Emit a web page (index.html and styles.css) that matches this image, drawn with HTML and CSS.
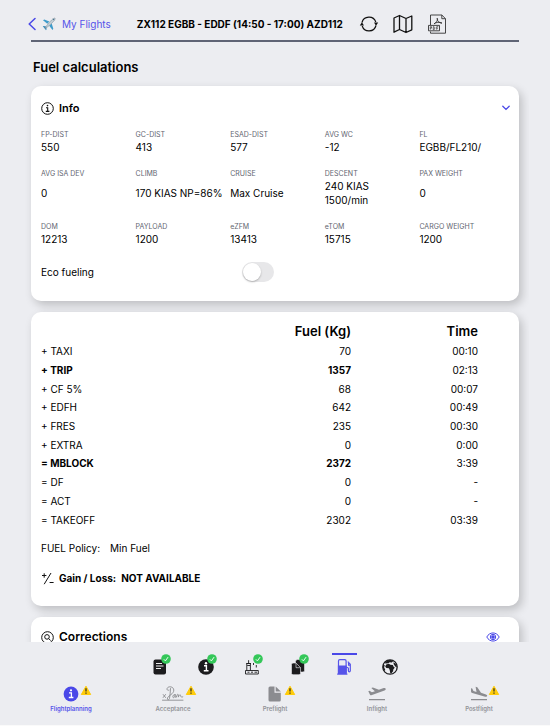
FILE: index.html
```html
<!DOCTYPE html>
<html lang="en">
<head>
<meta charset="utf-8">
<meta name="viewport" content="width=device-width, initial-scale=1">
<title>Fuel calculations</title>
<link rel="stylesheet" href="styles.css">
</head>
<body>
<svg class="defs" aria-hidden="true">
  <symbol id="check" viewBox="0 0 10 10"><circle cx="5" cy="5" r="4.8" fill="#34c759"/><path d="M2.9 5.3l1.5 1.6 2.7-3.8" fill="none" stroke="#fff" stroke-width=".9"/></symbol>
  <symbol id="warn" viewBox="0 0 12 11"><path d="M6 1.2L10.700 9.500H1.300z" fill="#ffcc0a" stroke="#ffcc0a" stroke-linejoin="round"/><path d="M6 3.2v3.300M6 7.600v1.200" stroke="#3b3420" stroke-width="1.3"/></symbol>
</svg>
<header class="topbar">
  <a class="back" href="#">
    <svg width="8" height="14" viewBox="0 0 8 14" fill="none" stroke="#4a48e8" stroke-width="1.5" stroke-linecap="round" stroke-linejoin="round"><path d="M7 1.5L1.2 7 7 12.5"/></svg>
    <svg class="plane" width="14" height="14" viewBox="0 0 14 14"><path d="M1 3.2l1.3-.7 5 2.1-2 2.2zM9.7 6.6l1.6 5.2-.8 1.2-3.3-4.2z" fill="#3f9ccb"/><path d="M.8 9.3l1-.4 2.4.7.4 2.7-.6 1-1.5-2.1z" fill="#3589b9"/><path d="M3 11.4C4 9 9.6 2.3 12 1.2c.8-.4 1.4.1 1.1.8C12.200 4.500 5.500 10.500 3 11.400z" fill="#c1ced6" stroke="#71828e" stroke-width=".5"/><path d="M11 1.900l1.200 1.200" stroke="#37708d"/></svg>
    <span>My Flights</span>
  </a>
  <h1 class="flight">ZX112 EGBB - EDDF (14:50 - 17:00) AZD112</h1>
  <div class="tools">
    <button class="tool" aria-label="Refresh"><svg width="20" height="20" viewBox="0 0 20 20" fill="none" stroke="#111" stroke-width="1.200"><path d="M3 8.500A7.200 7.200 0 0 1 16.800 8M17 11.500A7.200 7.200 0 0 1 3.200 12"/><path d="M15 8.600h4.200L17 11.800zM.8 11.400H5L2.900 8.200z" fill="#111" stroke="none"/></svg></button>
    <button class="tool" aria-label="Map"><svg width="20" height="20" viewBox="0 0 20 20" fill="none" stroke="#111" stroke-width="1.300" stroke-linejoin="round"><path d="M1 4l5.500-2.500 6.500 3L18.800 2v13.800L13 18.500l-6.500-3L1 18.200zM6.500 1.500v14M13 4.500v14"/></svg></button>
    <button class="tool" aria-label="PDF"><svg width="20" height="20" viewBox="0 0 20 20" fill="none" stroke="#333" stroke-width=".9"><path d="M3.500 11V1h11.300L18.500 4.700V19.200H3.500V17.500M14.800 1v3.700h3.700"/><path d="M1.500 11.400h11v5.400h-11z"/><path d="M3.300 15.700v-3h1.200v1.500H3.300M6.300 12.700v3h.8l.6-.7v-1.600l-.6-.7zM9.700 15.700v-3h1.600M9.700 14.200h1.300" stroke-width=".7"/><path d="M10 4.300c1.600 0-.2 4.300-3 5.600 2-1.900 5.500-2 8-.8-2.500.2-5-2.200-5-4.800z"/></svg></button>
  </div>
</header>

<main class="content">
  <h2 class="page-title">Fuel calculations</h2>

  <section class="card info">
    <div class="card-head">
      <svg width="13" height="13" viewBox="0 0 13 13" fill="none" stroke="#111"><circle cx="6.500" cy="6.500" r="5.800"/><path d="M5 5.700h1.700v3.600M4.800 9.400h3.600" stroke-width="1.100"/><circle cx="6.500" cy="3.600" r=".8" fill="#111" stroke="none"/></svg>
      <h3>Info</h3>
      <button class="end" aria-label="Collapse"><svg width="8" height="6" viewBox="0 0 8 6" fill="none" stroke="#4a48e8" stroke-width="1.300" stroke-linecap="round"><path d="M.8 1.300L4 4.400l3.200-3.100"/></svg></button>
    </div>
    <dl class="facts">
      <div><dt>FP-DIST</dt><dd>550</dd></div>
      <div><dt>GC-DIST</dt><dd>413</dd></div>
      <div><dt>ESAD-DIST</dt><dd>577</dd></div>
      <div><dt>AVG WC</dt><dd>-12</dd></div>
      <div><dt>FL</dt><dd>EGBB/FL210/</dd></div>
      <div><dt>AVG ISA DEV</dt><dd>0</dd></div>
      <div><dt>CLIMB</dt><dd>170 KIAS NP=86%</dd></div>
      <div><dt>CRUISE</dt><dd>Max Cruise</dd></div>
      <div><dt>DESCENT</dt><dd>240 KIAS<br>1500/min</dd></div>
      <div><dt>PAX WEIGHT</dt><dd>0</dd></div>
      <div><dt>DOM</dt><dd>12213</dd></div>
      <div><dt>PAYLOAD</dt><dd>1200</dd></div>
      <div><dt>eZFM</dt><dd>13413</dd></div>
      <div><dt>eTOM</dt><dd>15715</dd></div>
      <div><dt>CARGO WEIGHT</dt><dd>1200</dd></div>
    </dl>
    <div class="eco">
      <label for="eco">Eco fueling</label>
      <input class="switch" type="checkbox" role="switch" id="eco">
    </div>
  </section>

  <section class="card fuel">
    <table>
      <thead><tr><td></td><th scope="col">Fuel (Kg)</th><th scope="col">Time</th></tr></thead>
      <tbody>
        <tr><th scope="row">+ TAXI</th><td>70</td><td>00:10</td></tr>
        <tr class="strong"><th scope="row">+ TRIP</th><td>1357</td><td>02:13</td></tr>
        <tr><th scope="row">+ CF 5%</th><td>68</td><td>00:07</td></tr>
        <tr><th scope="row">+ EDFH</th><td>642</td><td>00:49</td></tr>
        <tr><th scope="row">+ FRES</th><td>235</td><td>00:30</td></tr>
        <tr><th scope="row">+ EXTRA</th><td>0</td><td>0:00</td></tr>
        <tr class="strong"><th scope="row">= MBLOCK</th><td>2372</td><td>3:39</td></tr>
        <tr><th scope="row">= DF</th><td>0</td><td>-</td></tr>
        <tr><th scope="row">= ACT</th><td>0</td><td>-</td></tr>
        <tr><th scope="row">= TAKEOFF</th><td>2302</td><td>03:39</td></tr>
      </tbody>
    </table>
    <p class="policy"><span>FUEL Policy:</span><span>Min Fuel</span></p>
    <p class="gain">
      <svg width="13" height="13" viewBox="0 0 13 13" fill="none" stroke="#111"><path d="M1 3.500h4.400M3.200 1.300v4.400M10 1L3.200 12.200M8.600 10.500h4"/></svg>
      <span>Gain / Loss:</span><span>NOT AVAILABLE</span>
    </p>
  </section>

  <section class="card corrections">
    <div class="card-head">
      <svg width="13" height="13" viewBox="0 0 13 13" fill="none" stroke="#111"><circle cx="6.500" cy="6.500" r="5.800"/><circle cx="6" cy="5.900" r="2.300"/><path d="M7.700 7.600l2 2"/></svg>
      <h3>Corrections</h3>
      <button class="end eye" aria-label="Show corrections"><svg width="14" height="10" viewBox="0 0 14 10" fill="none" stroke="#4a48e8"><path d="M.8 5C3.500-.4 10.500-.4 13.200 5 10.500 10.400 3.500 10.400.8 5z"/><circle cx="7" cy="5" r="2.700"/><circle cx="7" cy="5" r="1.300" fill="#4a48e8"/></svg></button>
    </div>
  </section>
</main>

<footer class="bottom">
  <nav class="steps" aria-label="Flight planning steps">
    <a href="#" aria-label="Briefing"><svg width="14" height="16" viewBox="0 0 14 16"><rect x=".5" y=".5" width="12.500" height="15" rx="2" fill="#1c1c1e"/><path d="M3 4.500h6M3 7h7.500M3 9.500h5" stroke="#eee" stroke-width="1"/></svg><svg class="badge"><use href="#check"/></svg></a>
    <a href="#" aria-label="Information"><svg width="16" height="16" viewBox="0 0 16 16"><circle cx="8" cy="8" r="7.800" fill="#1c1c1e"/><path d="M6 6.800h2.400v4.700M5.800 11.700h4.700" fill="none" stroke="#fff" stroke-width="1.400"/><circle cx="8" cy="4.200" r="1.200" fill="#fff"/></svg><svg class="badge"><use href="#check"/></svg></a>
    <a href="#" aria-label="Airports"><svg width="16" height="16" viewBox="0 0 16 16" fill="none" stroke="#1c1c1e" stroke-width=".9"><path d="M1.500 11.500h12.800v3.500H1.500zM2.800 11.500v-7h3.600v7M2.200 4.500h4.800M4.600 4.500V1.200M3.200 6.500h3M9.500 4v2M12.300 6v2.500M3.500 13.200h2M7 13.200h2M10.500 13.200h2.500"/></svg><svg class="badge"><use href="#check"/></svg></a>
    <a href="#" aria-label="Documents"><svg width="14" height="16" viewBox="0 0 14 16" fill="#1c1c1e" stroke="#ecedf1" stroke-width=".6"><path d="M4.500 2.500q0-2 2-2H10l3.500 3.500v7.500q0 1.500-1.500 1.500H4.500z"/><path d="M.5 5.500Q.5 4 2 4h3l4.500 4.500v5.800q0 1.400-1.500 1.400H2q-1.500 0-1.500-1.400z"/><path d="M5 4.200v4.500h4.500" fill="none"/></svg><svg class="badge"><use href="#check"/></svg></a>
    <a href="#" class="current" aria-current="page" aria-label="Fuel"><svg width="15" height="16" viewBox="0 0 15 16" fill="none" stroke="#5654e9" stroke-width="1.200"><path d="M1.500 14.500V2q0-1.300 1.300-1.300h5q1.300 0 1.300 1.300v12.500"/><path d="M1.500 7h7.600v7.500H1.500z" fill="#5654e9"/><path d="M.2 15.200h10.200M9.200 8.500h1.200q1 0 1 1v2.300q0 1 .9 1t1-1V5.200L10.800 2.600M11.600 4v2.200h1.700"/></svg></a>
    <a href="#" aria-label="Weather"><svg width="16" height="16" viewBox="0 0 16 16"><circle cx="8" cy="8" r="7.200" fill="#ecedf1" stroke="#1c1c1e" stroke-width="1.300"/><path d="M5.500 1.300L8.500.9l2.700 1-1.300 1.500-2.200-.2-1.400 1-2.500.2-1.300-.3zM4.200 5.600l2.600-.9 1.600 1 2.400.2 1 2 1 .7-1.500 2-.2 1.600-1.600 2.100H8.300L7.700 11 6.900 9.300 4.400 9 3.200 7.500z" fill="#1c1c1e"/><path d="M11.500 3.200l2.200 1.500 1.300 3.500-1.800-.6-1.600-2.700zM1 5.500l1.800.8-.7 2L3.300 11l-.7 1L.8 9z" fill="#1c1c1e"/></svg></a>
  </nav>
  <nav class="tabs" aria-label="Flight phases">
    <a href="#" class="active" aria-current="page"><span class="pic"><svg width="16" height="16" viewBox="0 0 16 16"><circle cx="8" cy="8" r="7.400" fill="#4a48e8"/><path d="M6 6.800h2.400v4.500M5.800 11.500h4.600" fill="none" stroke="#fff" stroke-width="1.300"/><circle cx="8" cy="4.300" r="1.100" fill="#fff"/></svg><svg class="alert"><use href="#warn"/></svg></span>Flightplanning</a>
    <a href="#"><span class="pic wide"><svg width="22" height="16" viewBox="0 0 22 16" fill="none" stroke="#8b8c90" stroke-width=".9" stroke-linecap="round"><path d="M.5 14.200h20.500M1.200 8.500l2.300 3M3.500 8.500l-2.300 3"/><path d="M8.500 2.500C8 6 8.300 9.500 7.500 12.500c-.7 2-2.600 1.500-2-.5C6.200 9.500 12 8 11.800 4 11.600.5 6.500-.2 5.200 2.200c-.8 1.600.6 2.600 1.800 2M12.300 8.500c-1.600.2-2 3.200-.8 3.200 1.300 0 1.800-2.600 1.600-3.500 0 1.300 0 3.500 1 3.300l1.300-3c.7-1 1.200.4.9 2.600.8-2 2-3.400 2.300-1.500.1 1.200.7 2 2.200 1.300"/></svg><svg class="alert"><use href="#warn"/></svg></span>Acceptance</a>
    <a href="#"><span class="pic"><svg width="14" height="16" viewBox="0 0 14 16" fill="#8b8c90"><path d="M.5 2q0-1.500 1.500-1.500h4.500v6.200h6.300v7.300q0 1.500-1.500 1.500H2Q.5 15.500.5 14z"/><path d="M7.700.5l5.100 5.100H7.700z"/></svg><svg class="alert"><use href="#warn"/></svg></span>Preflight</a>
    <a href="#"><span class="pic"><svg width="20" height="16" viewBox="0 0 20 16" fill="#8b8c90"><path d="M2 13h16v1.300H2zM1.300 5.200l1.200-.4 2.400 1.500 3-1.100L4.300 2l1.600-.6 6 2.400 4.800-1.700q1.600-.4 2 .6t-1.200 1.800L4.300 9.300q-.8.200-1.300-.6z"/></svg></span>Inflight</a>
    <a href="#"><span class="pic"><svg width="20" height="16" viewBox="0 0 20 16" fill="#8b8c90"><path d="M2 13h16v1.300H2zM2 2.200l1.200.3 1.300 2.500 3 1L6.600.8l1.700.5 3.700 5.500 5 1.600q1.500.7 1.200 1.700t-2 .6L3.300 7Q2 6.500 2 5.500z"/></svg><svg class="alert"><use href="#warn"/></svg></span>Postflight</a>
  </nav>
</footer>
</body>
</html>
```

FILE: styles.css
```css
* { box-sizing: border-box; }
body {
  margin: 0;
  height: 100vh;
  display: flex;
  flex-direction: column;
  background: #ecedf1;
  color: #000;
  font: 10px/14px Inter, "Liberation Sans", sans-serif;
}
h1, h2, h3, p, dl, dd { margin: 0; }
button { border: 0; padding: 0; background: none; }
a { color: inherit; text-decoration: none; }
svg { display: block; flex: none; }
.defs { position: absolute; width: 0; height: 0; }

.topbar {
  display: flex;
  align-items: center;
  margin: 0 31px;
  height: 42px;
  padding-top: 8px;
  border-bottom: 2px solid #5f6475;
}
.back { display: flex; align-items: center; color: #5654e9; margin-left: -3px; }
.plane { margin: 0 6px; }
.flight { margin-left: 26px; font-size: 10px; font-weight: 700; white-space: nowrap; }
.tools { display: flex; gap: 14px; margin-left: 16px; }

.content {
  flex: 1;
  min-height: 0;
  overflow: hidden;
  margin: 0 21px;
  padding: 16px 10px 0;
}
.page-title { margin: 0 2px 9px; font-size: 13px; line-height: 19px; font-weight: 600; }
.card {
  margin-bottom: 11px;
  padding: 14px 5px 0 10px;
  border-radius: 10px;
  background: #fff;
  box-shadow: 3px 4px 10px rgba(0, 0, 0, .2);
}
.card-head { display: flex; align-items: center; gap: 5px; height: 16px; }
h3 { font-size: 12px; font-weight: 600; }
.info h3 { font-size: 11px; }
.end { margin-left: auto; margin-right: 4px; }
.eye { margin-right: 14px; }

.facts {
  display: grid;
  grid-template-columns: repeat(5, 1fr);
  row-gap: 14px;
  margin-top: 13px;
}
.facts > div { display: flex; flex-direction: column; white-space: nowrap; }
dt { font-size: 7px; line-height: 11px; color: #62656f; }
dd { margin: auto 0; }
.eco { display: grid; grid-template-columns: 201px auto 1fr; align-items: center; margin-top: 16px; }
.info { padding-bottom: 19px; }
.switch {
  appearance: none;
  margin: 0;
  width: 32px;
  height: 20px;
  padding: 1px;
  border-radius: 10px;
  background: #e7e7e9;
}
.switch::before {
  content: "";
  display: block;
  width: 18px;
  height: 18px;
  border-radius: 50%;
  background: #fff;
  box-shadow: 0 1px 2px rgba(0, 0, 0, .25);
}
.switch:checked { background: #34c759; }
.switch:checked::before { margin-left: auto; }

.fuel { padding: 7px 41px 21px 10px; }
table { width: 100%; height: 210px; border-collapse: collapse; table-layout: fixed; }
th, td { padding: 0; text-align: right; font-weight: 400; }
tbody th { text-align: left; }
thead th { font-size: 13px; font-weight: 600; }
thead tr { height: 23px; }
th:last-child, td:last-child { width: 127px; }
th:first-child, thead td:first-child { width: 150px; }
.strong th, .strong td:nth-child(2) { font-weight: 700; }
.policy { display: flex; gap: 10px; margin-top: 12px; }
.gain { display: flex; align-items: center; gap: 5px; margin-top: 16px; font-weight: 700; }
.corrections { margin-bottom: 0; padding-top: 12px; height: 80px; }

.bottom { position: relative; padding: 11px 20px 0; height: 84px; background: #ecedf1; border-bottom: 1px solid #fafafa; }
.steps { display: flex; justify-content: center; gap: 16px; }
.steps a {
  position: relative;
  display: flex;
  justify-content: center;
  width: 30px;
  height: 27px;
  padding-top: 6px;
}
.current::before {
  content: "";
  position: absolute;
  top: 0;
  left: 3px;
  width: 25px;
  height: 2px;
  background: #4a48e8;
}
.badge { position: absolute; top: 1px; left: 16px; width: 10px; height: 10px; }
.tabs { display: grid; grid-template-columns: repeat(5, 1fr); margin-top: 6px; }
.tabs a {
  display: flex;
  flex-direction: column;
  align-items: center;
  color: #929398;
  font-size: 6px;
  line-height: 10px;
  font-weight: 600;
}
.tabs .active { color: #5654e9; }
.pic { position: relative; height: 18px; }
.alert { position: absolute; top: -1px; left: calc(50% + 9px); width: 12px; height: 11px; }
.wide .alert { left: calc(50% + 12px); }
```
